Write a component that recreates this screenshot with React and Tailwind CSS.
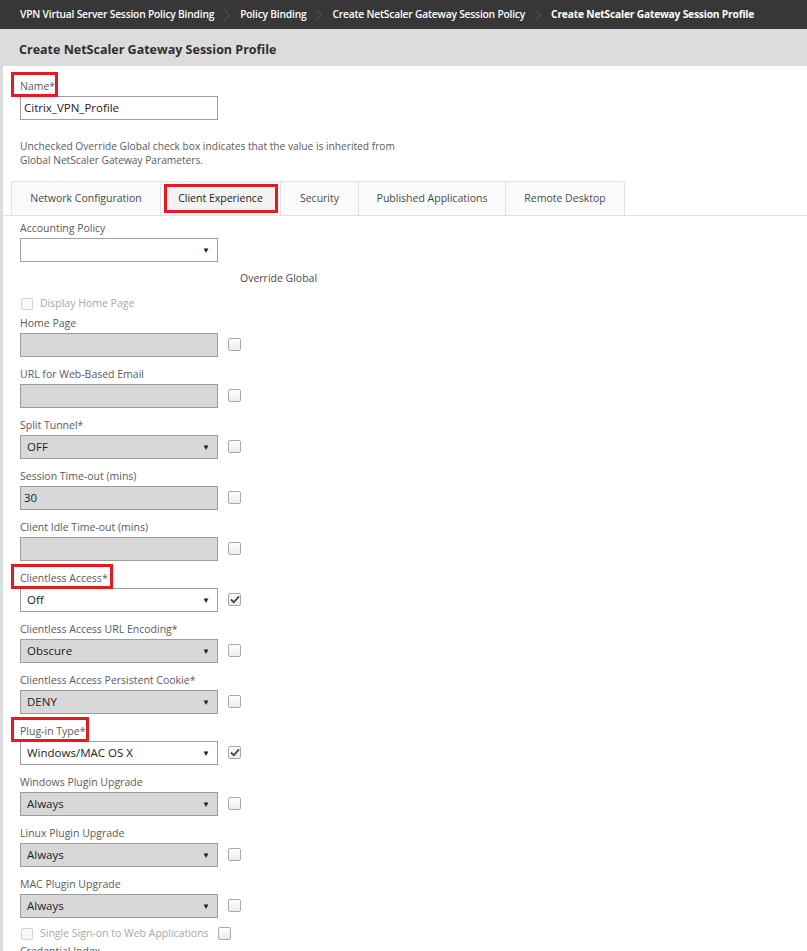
import React from 'react';

const font = { fontFamily: '"Open Sans", "Noto Sans", sans-serif' };

const crumbs = [
  'VPN Virtual Server Session Policy Binding',
  'Policy Binding',
  'Create NetScaler Gateway Session Policy',
  'Create NetScaler Gateway Session Profile',
];

const tabs = ['Network Configuration', 'Client Experience', 'Security', 'Published Applications', 'Remote Desktop'];

function Chevron() {
  return (
    <svg width="8" height="14" viewBox="0 0 8 14" className="mx-[9px] shrink-0">
      <path d="M1.5 1.5 L6.5 7 L1.5 12.5" fill="none" stroke="#5c5c5c" strokeWidth="1" />
    </svg>
  );
}

function Check({ checked }) {
  return (
    <span className="flex h-[13px] w-[13px] items-center justify-center rounded-[2px] border border-[#a9a9a9] bg-gradient-to-b from-white to-[#ececec]">
      {checked && (
        <svg width="10" height="9" viewBox="0 0 10 9">
          <path d="M1 4.5 L3.8 7.3 L9 1.3" fill="none" stroke="#444" strokeWidth="1.8" />
        </svg>
      )}
    </span>
  );
}

function DisabledCheck({ label, override }) {
  return (
    <div className="flex h-[18px] items-center">
      <span className="ml-px h-[12px] w-[12px] rounded-[2px] border border-[#d4d4d4] bg-[#f7f7f7]" />
      <span className="ml-[7px] text-[10.5px] text-[#a8a8a8]">{label}</span>
      {override && <span className="ml-[9px]"><Check /></span>}
    </div>
  );
}

function Label({ text, boxed }) {
  return (
    <div className="relative h-[16px] text-[10.5px] leading-[16px] text-[#5b5b5b]">
      {boxed && <span className="absolute -left-[9px] -top-[6px] h-[25px] border-[3px] border-[#e31b23]" style={{ width: boxed }} />}
      <span className="relative">{text}</span>
    </div>
  );
}

function Field({ label, value, select, disabled, checked, boxed, override = true }) {
  return (
    <div className="mb-[9px]">
      <Label text={label} boxed={boxed} />
      <div className="mt-[2px] flex items-center">
        <div
          className={
            'flex h-[24px] w-[198px] items-center justify-between border border-[#9d9d9d] pl-[6px] pr-[7px] text-[11.5px] text-[#222] ' +
            (disabled ? 'bg-[#d8d8d8]' : 'bg-white')
          }
        >
          <span className={value === '30' ? '-ml-[3px]' : ''}>{value}</span>
          {select && <span className="text-[8px] text-[#222]">▼</span>}
        </div>
        {override && <span className="ml-[10px]"><Check checked={checked} /></span>}
      </div>
    </div>
  );
}

export default function App() {
  return (
    <div className="min-h-[951px] w-[807px] bg-white" style={font}>
      <div className="flex h-[29px] items-center bg-[#373737] pl-[20px] text-[10.25px] font-semibold tracking-[-0.2px] text-white">
        {crumbs.map((c, i) => (
          <React.Fragment key={c}>
            {i > 0 && <Chevron />}
            <span className={i === crumbs.length - 1 ? 'font-bold' : ''}>{c}</span>
          </React.Fragment>
        ))}
      </div>
      <div className="bg-[#dcdcdc] pl-[3px]">
        <div className="flex h-[37px] items-center bg-[#dcdcdc] pl-[16px] pt-[5px] text-[12.5px] font-bold text-[#2e2e2e]">
          Create NetScaler Gateway Session Profile
        </div>
        <div className="bg-white pb-[20px] pt-[12px]">
          <div className="pl-[17px]">
            <Label text="Name*" boxed="47px" />
            <div className="mt-[2px] flex h-[24px] w-[198px] items-center border border-[#9d9d9d] pl-[3px] text-[11.5px] text-[#222]">
              Citrix_VPN_Profile
            </div>
            <p className="mt-[19px] text-[10.2px] leading-[14px] text-[#5b5b5b]">
              Unchecked Override Global check box indicates that the value is inherited from
              <br />
              Global NetScaler Gateway Parameters.
            </p>
          </div>

          <div className="mt-[14px] flex border-b border-[#e2e2e2] pl-[8px]">
            <div className="flex rounded-t-[3px] border border-b-0 border-[#e2e2e2] bg-[#fafafa]">
              {tabs.map((t, i) => (
                <div
                  key={t}
                  className={
                    'flex h-[33px] items-center justify-center text-[10.5px] text-[#4a4a4a] ' +
                    (i > 0 ? 'border-l border-[#e2e2e2] ' : '') +
                    ['w-[148px]', 'w-[120px]', 'w-[78px]', 'w-[147px]', 'w-[119px]'][i]
                  }
                >
                  {i === 1 ? (
                    <span className="flex h-[29px] w-[114px] items-center justify-center border-[3px] border-[#e31b23] bg-[#f2f2f2] text-[#222]">
                      {t}
                    </span>
                  ) : (
                    t
                  )}
                </div>
              ))}
            </div>
          </div>

          <div className="pl-[17px] pt-[4px]">
            <Field label="Accounting Policy" value="" select override={false} />
            <div className="mt-[2px] ml-[220px] text-[10.5px] text-[#4a4a4a]">Override Global</div>
            <div className="mt-[8px]">
              <DisabledCheck label="Display Home Page" />
            </div>
            <div className="mt-[2px]">
              <Field label="Home Page" value="" disabled />
              <Field label="URL for Web-Based Email" value="" disabled />
              <Field label="Split Tunnel*" value="OFF" select disabled />
              <Field label="Session Time-out (mins)" value="30" disabled />
              <Field label="Client Idle Time-out (mins)" value="" disabled />
              <Field label="Clientless Access*" value="Off" select checked boxed="102px" />
              <Field label="Clientless Access URL Encoding*" value="Obscure" select disabled />
              <Field label="Clientless Access Persistent Cookie*" value="DENY" select disabled />
              <Field label="Plug-in Type*" value="Windows/MAC OS X" select checked boxed="78px" />
              <Field label="Windows Plugin Upgrade" value="Always" select disabled />
              <Field label="Linux Plugin Upgrade" value="Always" select disabled />
              <Field label="MAC Plugin Upgrade" value="Always" select disabled />
            </div>
            <div className="-mt-[2px]">
              <DisabledCheck label="Single Sign-on to Web Applications" override />
            </div>
            <Label text="Credential Index" />
          </div>
        </div>
      </div>
    </div>
  );
}
